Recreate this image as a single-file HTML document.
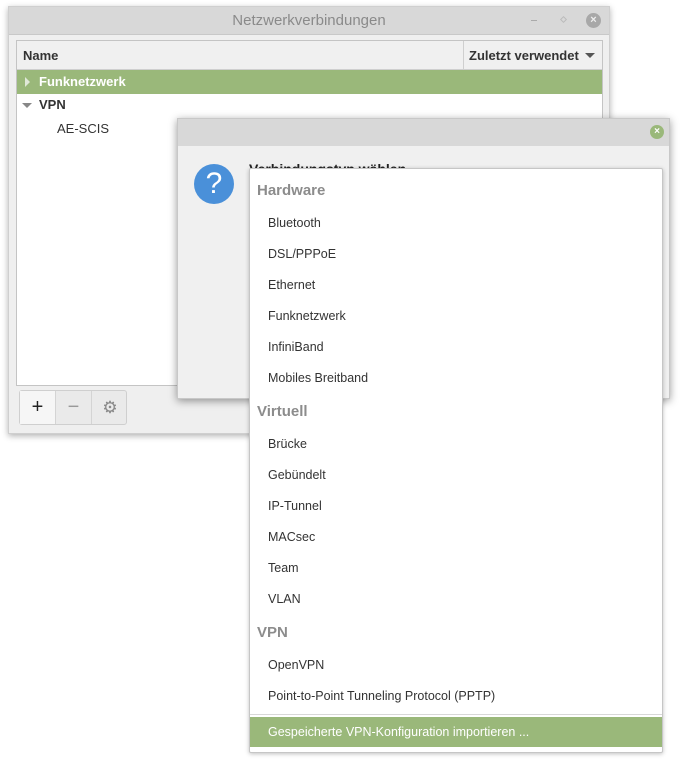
<!DOCTYPE html>
<html><head><meta charset="utf-8">
<style>
*{box-sizing:border-box;margin:0;padding:0}
body{width:689px;height:764px;background:#fff;font-family:"Liberation Sans",sans-serif;font-size:13px;color:#333;position:relative;overflow:hidden}
.abs{position:absolute}
#win{left:8px;top:6px;width:602px;height:428px;background:#efefef;border:1px solid #cfcfcf;box-shadow:0 2px 6px rgba(0,0,0,.3)}
#wt{left:0;top:0;width:100%;height:28px;background:#d8d8d8;border-bottom:1px solid #c8c8c8;text-align:center;line-height:28px;font-size:15px;color:#8a8a8a}
#list{left:7px;top:33px;width:587px;height:346px;background:#fff;border:1px solid #c4c4c4}
#hdr{left:0;top:0;width:100%;height:29px;background:#f0f0f0;border-bottom:1px solid #cfcfcf;font-weight:bold;line-height:29px}
#row1{left:0;top:29px;width:100%;height:24px;background:#9ab87a;color:#fff;font-weight:bold;line-height:24px}
#tb{left:10px;top:383px;width:108px;height:35px;border:1px solid #cfcfcf;border-radius:3px;background:#eaeaea}
.bt{position:absolute;top:0;width:36px;height:33px;text-align:center;line-height:33px;font-size:20px;border-right:1px solid #d4d4d4}
#dlg{left:177px;top:118px;width:493px;height:281px;background:#f0f0f0;border:1px solid #c8c8c8;box-shadow:0 2px 8px rgba(0,0,0,.4)}
#dt{left:0;top:0;width:100%;height:27px;background:#d8d8d8}
#menu{left:249px;top:168px;width:414px;height:585px;background:#fff;border:1px solid #c6c6c6;border-radius:2px;box-shadow:0 1px 4px rgba(0,0,0,.25)}
.h{position:absolute;left:7px;font-weight:bold;font-size:15px;color:#8c8c8c}
.i{position:absolute;left:18px;font-size:12.5px;color:#333}
</style></head><body>
<div id="win" class="abs">
 <div id="wt" class="abs">Netzwerkverbindungen</div>
 <div class="abs" style="left:522px;top:13px;width:6px;height:1px;background:#aaa"></div>
 <div class="abs" style="left:552px;top:10px;width:5px;height:5px;border:1px solid #bbb;transform:rotate(45deg)"></div>
 <div class="abs" style="left:577px;top:6px;width:15px;height:15px;border-radius:50%;background:#a8a8a8;color:#eee;font-size:11px;line-height:15px;text-align:center;font-weight:bold">×</div>
 <div id="list" class="abs">
  <div id="hdr" class="abs"><span style="position:absolute;left:6px">Name</span>
   <div class="abs" style="left:446px;top:0;width:1px;height:29px;background:#cfcfcf"></div>
   <span style="position:absolute;left:452px">Zuletzt verwendet</span>
   <div class="abs" style="left:568px;top:12px;border-left:5px solid transparent;border-right:5px solid transparent;border-top:5px solid #555"></div>
  </div>
  <div id="row1" class="abs"><div class="abs" style="left:8px;top:7px;border-top:5px solid transparent;border-bottom:5px solid transparent;border-left:5px solid #e0e8d8"></div><span style="position:absolute;left:22px">Funknetzwerk</span></div>
  <div class="abs" style="left:5px;top:62px;border-left:5px solid transparent;border-right:5px solid transparent;border-top:5px solid #888"></div>
  <div class="abs" style="left:22px;top:56px;font-weight:bold">VPN</div>
  <div class="abs" style="left:40px;top:80px">AE-SCIS</div>
 </div>
 <div id="tb" class="abs">
  <div class="bt" style="left:0;background:#f6f6f6;color:#222">+</div>
  <div class="bt" style="left:36px;color:#999">−</div>
  <div class="bt" style="left:72px;border:none;color:#888;font-size:17px">⚙</div>
 </div>
</div>
<div id="dlg" class="abs">
 <div id="dt" class="abs"></div>
 <div class="abs" style="left:472px;top:6px;width:14px;height:14px;border-radius:50%;background:#9ab87a;color:#fff;font-size:10px;line-height:14px;text-align:center;font-weight:bold">×</div>
 <div class="abs" style="left:16px;top:45px;width:40px;height:40px;border-radius:50%;background:#4a90d9;color:#fff;font-size:30px;line-height:40px;text-align:center">?</div>
 <div class="abs" style="left:71px;top:42px;font-weight:bold;font-size:14px;color:#222">Verbindungstyp wählen</div>
</div>
<div id="menu" class="abs">
 <div class="h" style="top:13px">Hardware</div>
 <div class="i" style="top:47px">Bluetooth</div>
 <div class="i" style="top:78px">DSL/PPPoE</div>
 <div class="i" style="top:109px">Ethernet</div>
 <div class="i" style="top:140px">Funknetzwerk</div>
 <div class="i" style="top:171px">InfiniBand</div>
 <div class="i" style="top:202px">Mobiles Breitband</div>
 <div class="h" style="top:234px">Virtuell</div>
 <div class="i" style="top:268px">Brücke</div>
 <div class="i" style="top:299px">Gebündelt</div>
 <div class="i" style="top:330px">IP-Tunnel</div>
 <div class="i" style="top:361px">MACsec</div>
 <div class="i" style="top:392px">Team</div>
 <div class="i" style="top:423px">VLAN</div>
 <div class="h" style="top:455px">VPN</div>
 <div class="i" style="top:489px">OpenVPN</div>
 <div class="i" style="top:520px">Point-to-Point Tunneling Protocol (PPTP)</div>
 <div class="abs" style="left:0;top:545px;width:100%;height:1px;background:#d8d8d8"></div>
 <div class="abs" style="left:0;top:548px;width:100%;height:30px;background:#9ab87a"></div>
 <div class="i" style="top:556px;color:#fff">Gespeicherte VPN-Konfiguration importieren ...</div>
</div>
</body></html>
